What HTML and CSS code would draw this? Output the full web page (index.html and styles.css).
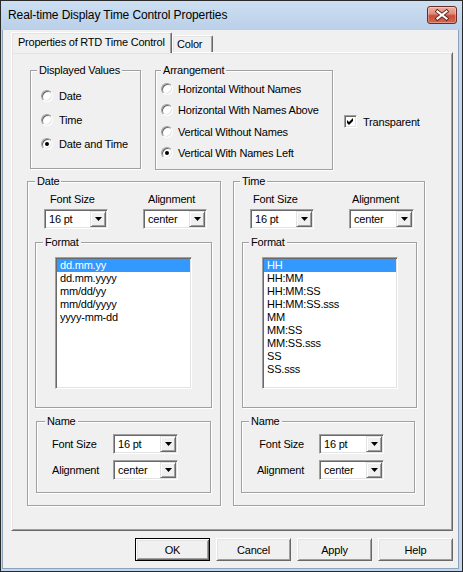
FILE: index.html
```html
<!DOCTYPE html>
<html>
<head>
<meta charset="utf-8">
<title>Real-time Display Time Control Properties</title>
<link rel="stylesheet" href="styles.css">
</head>
<body>
<div class="window">
  <div class="titlebar">
    <span class="title">Real-time Display Time Control Properties</span>
    <div class="close">
      <svg width="28" height="16" viewBox="0 0 28 16">
        <path d="M9.5 4.5L18.5 11.5M18.5 4.5L9.5 11.5" stroke="#5a1d16" stroke-width="3.8" stroke-linecap="square" fill="none"/>
        <path d="M9.5 4.5L18.5 11.5M18.5 4.5L9.5 11.5" stroke="#ffffff" stroke-width="2.2" stroke-linecap="square" fill="none"/>
      </svg>
    </div>
  </div>
  <div class="client">
    <div class="tabs">
      <div class="tab active">Properties of RTD Time Control</div>
      <div class="tab">Color</div>
    </div>
    <div class="panel">
      <div class="row-top">
        <div class="group g-disp">
          <div class="gtitle">Displayed Values</div>
          <div class="radios r-disp">
            <div class="opt"><span class="radio"></span>Date</div>
            <div class="opt"><span class="radio"></span>Time</div>
            <div class="opt"><span class="radio on"></span>Date and Time</div>
          </div>
        </div>
        <div class="group g-arr">
          <div class="gtitle">Arrangement</div>
          <div class="radios r-arr">
            <div class="opt"><span class="radio"></span>Horizontal Without Names</div>
            <div class="opt"><span class="radio"></span>Horizontal With Names Above</div>
            <div class="opt"><span class="radio"></span>Vertical Without Names</div>
            <div class="opt"><span class="radio on"></span>Vertical With Names Left</div>
          </div>
        </div>
        <div class="checkrow">
          <span class="check"><svg width="7" height="7" viewBox="0 0 7 7"><path d="M0 2L2 4L6 0V3L2 7L0 5Z" fill="#000"/></svg></span>Transparent
        </div>
      </div>

      <div class="row-mid">
        <div class="group g-date">
          <div class="gtitle">Date</div>
          <div class="combos">
            <div class="ccol c1">
              <div class="clabel">Font Size</div>
              <div class="combo w64"><span class="cval">16 pt</span><span class="cbtn"><svg width="7" height="4" viewBox="0 0 7 4"><path d="M0 0H7L3.5 4Z" fill="#000"/></svg></span></div>
            </div>
            <div class="ccol c2">
              <div class="clabel">Alignment</div>
              <div class="combo w64"><span class="cval">center</span><span class="cbtn"><svg width="7" height="4" viewBox="0 0 7 4"><path d="M0 0H7L3.5 4Z" fill="#000"/></svg></span></div>
            </div>
          </div>
          <div class="group g-fmt">
            <div class="gtitle">Format</div>
            <div class="listbox">
              <div class="li sel">dd.mm.yy</div>
              <div class="li">dd.mm.yyyy</div>
              <div class="li">mm/dd/yy</div>
              <div class="li">mm/dd/yyyy</div>
              <div class="li">yyyy-mm-dd</div>
            </div>
          </div>
          <div class="group g-name">
            <div class="gtitle">Name</div>
            <div class="nrow">
              <span class="nlabel">Font Size</span>
              <div class="combo w65"><span class="cval">16 pt</span><span class="cbtn"><svg width="7" height="4" viewBox="0 0 7 4"><path d="M0 0H7L3.5 4Z" fill="#000"/></svg></span></div>
            </div>
            <div class="nrow">
              <span class="nlabel">Alignment</span>
              <div class="combo w65"><span class="cval">center</span><span class="cbtn"><svg width="7" height="4" viewBox="0 0 7 4"><path d="M0 0H7L3.5 4Z" fill="#000"/></svg></span></div>
            </div>
          </div>
        </div>

        <div class="group g-time">
          <div class="gtitle">Time</div>
          <div class="combos">
            <div class="ccol c1">
              <div class="clabel">Font Size</div>
              <div class="combo w64"><span class="cval">16 pt</span><span class="cbtn"><svg width="7" height="4" viewBox="0 0 7 4"><path d="M0 0H7L3.5 4Z" fill="#000"/></svg></span></div>
            </div>
            <div class="ccol c2">
              <div class="clabel">Alignment</div>
              <div class="combo w65"><span class="cval">center</span><span class="cbtn"><svg width="7" height="4" viewBox="0 0 7 4"><path d="M0 0H7L3.5 4Z" fill="#000"/></svg></span></div>
            </div>
          </div>
          <div class="group g-fmt">
            <div class="gtitle">Format</div>
            <div class="listbox">
              <div class="li sel">HH</div>
              <div class="li">HH:MM</div>
              <div class="li">HH:MM:SS</div>
              <div class="li">HH:MM:SS.sss</div>
              <div class="li">MM</div>
              <div class="li">MM:SS</div>
              <div class="li">MM:SS.sss</div>
              <div class="li">SS</div>
              <div class="li">SS.sss</div>
            </div>
          </div>
          <div class="group g-name">
            <div class="gtitle">Name</div>
            <div class="nrow">
              <span class="nlabel">Font Size</span>
              <div class="combo w65"><span class="cval">16 pt</span><span class="cbtn"><svg width="7" height="4" viewBox="0 0 7 4"><path d="M0 0H7L3.5 4Z" fill="#000"/></svg></span></div>
            </div>
            <div class="nrow">
              <span class="nlabel">Alignment</span>
              <div class="combo w65"><span class="cval">center</span><span class="cbtn"><svg width="7" height="4" viewBox="0 0 7 4"><path d="M0 0H7L3.5 4Z" fill="#000"/></svg></span></div>
            </div>
          </div>
        </div>
      </div>
    </div>
    <div class="buttons">
      <button class="btn default">OK</button>
      <button class="btn">Cancel</button>
      <button class="btn">Apply</button>
      <button class="btn">Help</button>
    </div>
  </div>
</div>
</body>
</html>
```
FILE: styles.css
```css
html, body {
  margin: 0;
  padding: 0;
  background: #f0f0f0;
}
body {
  font-family: "Liberation Sans", Arial, sans-serif;
  font-size: 11px;
  letter-spacing: -0.2px;
  color: #000;
}
.window {
  width: 463px;
  height: 572px;
  box-sizing: border-box;
  border: 1px solid #2a2a2a;
  background: #c2d6ed;
  display: flex;
  flex-direction: column;
}
.titlebar {
  height: 29px;
  flex: none;
  display: flex;
  align-items: flex-start;
  background: linear-gradient(#cddff2, #bad0e9);
}
.title {
  font-size: 12px;
  letter-spacing: -0.1px;
  line-height: 29px;
  padding-left: 7px;
}
.close {
  margin: 5px 5px 0 auto;
  width: 30px;
  height: 18px;
  box-sizing: border-box;
  border: 1px solid #6d2b22;
  border-radius: 3px;
  background: linear-gradient(#eab0a2 0%, #dd8d7b 42%, #c84e3a 55%, #d3674f 100%);
  box-shadow: inset 0 0 0 1px rgba(255,255,255,0.3);
  display: flex;
}
.client {
  flex: 1;
  margin: 0 3px 2px 1px;
  background: #f0f0f0;
  border: 1px solid #8da2bb;
  border-top: none;
  display: flex;
  flex-direction: column;
}
.tabs {
  height: 22px;
  flex: none;
  display: flex;
  align-items: flex-end;
  padding-left: 8px;
}
.tab {
  box-sizing: border-box;
  height: 17px;
  width: 41px;
  border: 1px solid;
  border-bottom: none;
  border-color: #fff #696969 #696969 #fff;
  box-shadow: inset -1px 0 0 #a0a0a0, inset 1px 1px 0 #e3e3e3;
  border-radius: 2px 2px 0 0;
  padding: 2px 0 0 4px;
  line-height: 13px;
  background: #f0f0f0;
  white-space: nowrap;
}
.tab.active {
  width: 161px;
  height: 21px;
  margin-bottom: -1px;
  padding: 3px 0 0 6px;
  letter-spacing: -0.22px;
  position: relative;
  z-index: 1;
}
.panel {
  box-sizing: border-box;
  flex: none;
  margin-left: 8px;
  width: 442px;
  height: 479px;
  border: 1px solid;
  border-color: #fff #696969 #696969 #fff;
  box-shadow: inset 1px 1px 0 #e3e3e3, inset -1px -1px 0 #a0a0a0;
  display: flex;
  flex-direction: column;
}

/* group boxes */
.group {
  box-sizing: border-box;
  flex: none;
  border: 1px solid #a0a0a0;
  box-shadow: inset 1px 1px 0 #fff, 1px 1px 0 #fff;
  display: flex;
  flex-direction: column;
  align-items: flex-start;
}
.gtitle {
  margin-top: -7px;
  padding: 0 2px;
  background: #f0f0f0;
  line-height: 13px;
  white-space: nowrap;
}

.row-top {
  display: flex;
  align-items: flex-start;
  margin-top: 17px;
}
.g-disp { margin-left: 18px; width: 111px; height: 99px; }
.g-disp .gtitle { margin-left: 6px; }
.g-arr { margin-left: 14px; width: 178px; height: 100px; }
.g-arr .gtitle { margin-left: 5px; }

.opt {
  display: flex;
  align-items: center;
  white-space: nowrap;
}
.r-disp { margin-top: 7px; }
.r-disp .opt { height: 24px; padding-left: 10px; gap: 6px; }
.r-arr { margin-top: 1px; }
.r-arr .opt { height: 21.5px; padding-left: 5px; gap: 5px; }

.radio {
  flex: none;
  box-sizing: border-box;
  width: 12px;
  height: 12px;
  border-radius: 50%;
  border: 1px solid;
  border-color: #a0a0a0 #fff #fff #a0a0a0;
  box-shadow: inset 1px 1px 0 #696969, inset -1px -1px 0 #e3e3e3;
  background: #fff;
  display: flex;
  align-items: center;
  justify-content: center;
}
.radio.on::after {
  content: "";
  width: 4px;
  height: 4px;
  border-radius: 50%;
  background: #000;
}

.checkrow {
  margin: 45px 0 0 11px;
  height: 13px;
  display: flex;
  align-items: center;
  gap: 6px;
  white-space: nowrap;
}
.check {
  flex: none;
  box-sizing: border-box;
  width: 13px;
  height: 13px;
  border: 1px solid;
  border-color: #a0a0a0 #fff #fff #a0a0a0;
  box-shadow: inset 1px 1px 0 #696969, inset -1px -1px 0 #e3e3e3;
  background: #fff;
  display: flex;
  align-items: center;
  justify-content: center;
}

.row-mid {
  display: flex;
  align-items: flex-start;
  margin-top: 11px;
}
.g-date { margin-left: 15px; width: 194px; height: 325px; }
.g-date > .gtitle { margin-left: 7px; }
.g-time { margin-left: 12px; width: 192px; height: 325px; }
.g-time > .gtitle { margin-left: 6px; }

.combos {
  display: flex;
  margin-top: 5px;
}
.ccol {
  display: flex;
  flex-direction: column;
  align-items: flex-start;
}
.clabel {
  line-height: 13px;
  margin-bottom: 3px;
  white-space: nowrap;
}
.c1 { margin-left: 16px; }
.c2 { margin-left: 35px; }
.g-date .c1 .clabel { padding-left: 6px; }
.g-date .c2 .clabel { padding-left: 5px; }
.g-time .clabel { padding-left: 3px; }

.combo {
  box-sizing: border-box;
  height: 20px;
  border: 1px solid;
  border-color: #a0a0a0 #fff #fff #a0a0a0;
  box-shadow: inset 1px 1px 0 #696969, inset -1px -1px 0 #e3e3e3;
  background: #fff;
  padding: 1px;
  display: flex;
}
.w64 { width: 64px; }
.w65 { width: 65px; }
.cval {
  flex: 1;
  padding-left: 3px;
  line-height: 16px;
  white-space: nowrap;
  overflow: hidden;
}
.cbtn {
  flex: none;
  box-sizing: border-box;
  width: 16px;
  height: 16px;
  border: 1px solid;
  border-color: #e3e3e3 #696969 #696969 #e3e3e3;
  box-shadow: inset 1px 1px 0 #fff, inset -1px -1px 0 #a0a0a0;
  background: #f0f0f0;
  display: flex;
  align-items: center;
  justify-content: center;
}

.g-fmt { margin-top: 13px; height: 166px; }
.g-fmt .gtitle { margin-left: 7px; }
.g-date .g-fmt { margin-left: 7px; width: 177px; }
.g-time .g-fmt { margin-left: 8px; width: 175px; }
.g-time .g-fmt .gtitle { margin-left: 6px; }

.listbox {
  box-sizing: border-box;
  margin: 8px 0 0 19px;
  height: 132px;
  border: 1px solid;
  border-color: #a0a0a0 #fff #fff #a0a0a0;
  box-shadow: inset 1px 1px 0 #696969, inset -1px -1px 0 #e3e3e3;
  background: #fff;
  padding: 1px;
}
.g-date .listbox { width: 137px; }
.g-time .listbox { width: 136px; }
.li {
  height: 13px;
  line-height: 13px;
  padding-left: 3px;
  white-space: nowrap;
}
.li.sel {
  background: #3399ff;
  color: #fff;
}

.g-name { margin-top: 13px; height: 72px; }
.g-date .g-name { margin-left: 8px; width: 175px; }
.g-date .g-name .gtitle { margin-left: 8px; }
.g-time .g-name { margin-left: 7px; width: 174px; }
.g-time .g-name .gtitle { margin-left: 7px; }
.nrow {
  display: flex;
  align-items: center;
  height: 20px;
  margin-top: 6px;
}
.nlabel { white-space: nowrap; }
.g-date .nrow { padding-left: 15px; }
.g-date .nlabel { width: 61px; }
.g-time .nlabel { width: 62px; margin-right: 15px; text-align: right; }

.buttons {
  display: flex;
  gap: 6px;
  margin-top: 7px;
  padding-left: 132px;
}
.btn {
  box-sizing: border-box;
  width: 75px;
  height: 23px;
  padding: 0;
  margin: 0;
  font: inherit;
  letter-spacing: inherit;
  color: #000;
  border: 1px solid;
  border-color: #fff #696969 #696969 #fff;
  border-radius: 0;
  box-shadow: inset 1px 1px 0 #e3e3e3, inset -1px -1px 0 #a0a0a0;
  background: #f0f0f0;
  display: flex;
  align-items: center;
  justify-content: center;
}
.btn.default {
  border-color: #000;
  box-shadow: inset 1px 1px 0 #fff, inset -1px -1px 0 #696969, inset 2px 2px 0 #e3e3e3, inset -2px -2px 0 #a0a0a0;
}
```
